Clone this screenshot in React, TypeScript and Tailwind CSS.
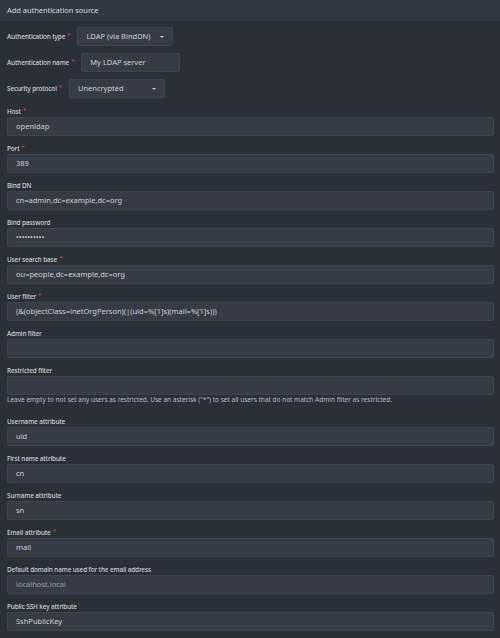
import type { ReactNode } from "react"

type Field = {
  label: string
  value?: string
  placeholder?: string
  required?: boolean
  help?: string
}

const fields: Field[] = [
  { label: "Host", value: "openldap", required: true },
  { label: "Port", value: "389", required: true },
  { label: "Bind DN", value: "cn=admin,dc=example,dc=org" },
  { label: "Bind password", value: "••••••••••" },
  { label: "User search base", value: "ou=people,dc=example,dc=org", required: true },
  { label: "User filter", value: "(&(objectClass=inetOrgPerson)(|(uid=%[1]s)(mail=%[1]s)))", required: true },
  { label: "Admin filter", value: "" },
  {
    label: "Restricted filter",
    value: "",
    help: 'Leave empty to not set any users as restricted. Use an asterisk ("*") to set all users that do not match Admin filter as restricted.',
  },
  { label: "Username attribute", value: "uid" },
  { label: "First name attribute", value: "cn" },
  { label: "Surname attribute", value: "sn" },
  { label: "Email attribute", value: "mail", required: true },
  { label: "Default domain name used for the email address", placeholder: "localhost.local" },
  { label: "Public SSH key attribute", value: "SshPublicKey" },
]

function Label({ text, required }: { text: string; required?: boolean }) {
  return (
    <span className="font-medium text-[6.4px] tracking-[-0.12px] text-[#d0d4d8] whitespace-nowrap">
      {text}
      {required && <span className="text-[#c9485a] text-[6px] align-top ml-[2px] relative top-[-1px]">*</span>}
    </span>
  )
}

function Box({ children, className = "" }: { children?: ReactNode; className?: string }) {
  return (
    <div
      className={
        "h-[19px] flex items-center px-[8px] rounded-[2px] bg-[#353c45] border border-[#3d4550] text-[7.5px] text-[#cdd1d5] whitespace-nowrap overflow-hidden " +
        className
      }
    >
      {children}
    </div>
  )
}

function Caret() {
  return <span className="ml-auto w-0 h-0 border-l-[2px] border-r-[2px] border-t-[2.5px] border-l-transparent border-r-transparent border-t-[#c8ccd0]" />
}

export default function App() {
  return (
    <div className="w-[500px] h-[638px] bg-[#2a3038] overflow-hidden" style={{ fontFamily: '"Noto Sans", "Open Sans", sans-serif' }}>
      <div className="h-[22px] flex items-center px-[7px] bg-[#2f3740] border-b border-[#262c33] text-[7.5px] tracking-[-0.05px] text-[#d5d9dd]">
        Add authentication source
      </div>

      <div className="pl-[7px] pr-[6px] pt-[5px]">
        <div className="flex flex-col gap-[7px]">
          <div className="flex items-center gap-[7px]">
            <Label text="Authentication type" required />
            <Box className="w-[96px]">
              <span>LDAP (via BindDN)</span>
              <Caret />
            </Box>
          </div>
          <div className="flex items-center gap-[7px]">
            <Label text="Authentication name" required />
            <Box className="w-[99px]">My LDAP server</Box>
          </div>
          <div className="flex items-center gap-[7px]">
            <Label text="Security protocol" required />
            <Box className="w-[96px]">
              <span>Unencrypted</span>
              <Caret />
            </Box>
          </div>
        </div>

        <div className="flex flex-col gap-[7px] mt-[8px]">
          {fields.map(f => (
            <div key={f.label} className="flex flex-col">
              <div className="h-[11px] flex items-center">
                <Label text={f.label} required={f.required} />
              </div>
              <Box>
                {f.value ? <span>{f.value}</span> : <span className="text-[#9ba1a8]">{f.placeholder}</span>}
              </Box>
              {f.help && (
                <div className="text-[6.5px] leading-[9px] pb-[5px] text-[#b9bec4] whitespace-nowrap">{f.help}</div>
              )}
            </div>
          ))}
        </div>
      </div>
    </div>
  )
}
